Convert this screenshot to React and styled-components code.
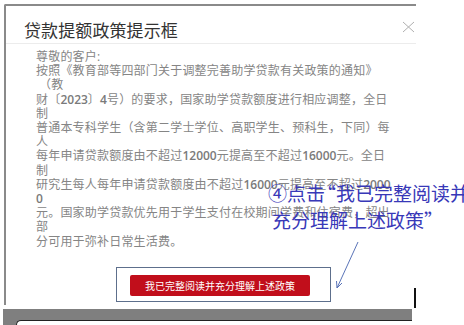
import React from 'react';
import styled, { createGlobalStyle } from 'styled-components';

const GlobalStyle = createGlobalStyle`
  html, body {
    margin: 0;
    padding: 0;
    background: #ffffff;
  }
  body {
    font-family: "Open Sans", "Noto Sans CJK SC", sans-serif;
  }
`;

const Page = styled.div`
  position: relative;
  width: 464px;
  height: 325px;
  overflow: hidden;
  background: #ffffff;
`;

const Dialog = styled.div`
  box-sizing: border-box;
  margin: 4px 0 0 4px;
  width: 412px;
  height: 301px;
  border-top: 2px solid #8a8a8a;
  border-left: 2px solid #8a8a8a;
  border-top-left-radius: 2px;
  display: flex;
  flex-direction: column;
`;

const Header = styled.div`
  box-sizing: border-box;
  height: 38px;
  display: flex;
  align-items: flex-start;
  justify-content: space-between;
  padding: 0 1px 0 18px;
  border-bottom: 1px solid #ececec;
`;

const Title = styled.div`
  font-family: "Noto Sans CJK SC", sans-serif;
  font-size: 17px;
  line-height: 24px;
  padding-top: 12px;
  color: #333333;
  letter-spacing: 0.1px;
`;

const Close = styled.div`
  width: 13px;
  height: 12px;
  margin-top: 15px;
  display: flex;
`;

const Body = styled.div`
  padding: 6px 0 0 30px;
  font-size: 12px;
  line-height: 14.2px;
  letter-spacing: 0.2px;
  color: #858585;
`;

const Line = styled.div`
  white-space: nowrap;
  padding-left: ${(p) => (p.$indent ? '3px' : '0')};
`;

const Num = styled.span`
  font-weight: 600;
  letter-spacing: 0;
  color: #7a7a7a;
`;

const Footer = styled.div`
  margin-top: 18px;
  padding-left: 110px;
  display: flex;
`;

const Frame = styled.div`
  border: 1px solid #5d6f8c;
  padding: 5px 20px 5px 13px;
`;

const AgreeButton = styled.button`
  width: 180px;
  height: 21px;
  border: none;
  border-radius: 2px;
  background: #c10e1b;
  color: #ffffff;
  font-family: "Noto Sans CJK SC", sans-serif;
  font-size: 10px;
  padding: 0;
  cursor: pointer;
`;

const Strip = styled.div`
  margin: 4px 0 0 3px;
  width: 409px;
  height: 16px;
  background: #7f7f7f;
  display: flex;
  flex-direction: column;
`;

const NextWindow = styled.div`
  margin: 11px 0 0 13px;
  flex: 1;
  background: #ffffff;
  border-top-left-radius: 6px;
  border-top: 1px solid #222;
  border-left: 1px solid #222;
`;

const Note = styled.div`
  position: absolute;
  left: 268px;
  top: 179px;
  font-family: "Noto Sans CJK SC", sans-serif;
  font-size: 19px;
  line-height: 27px;
  color: #3838b8;
  white-space: nowrap;
`;

const NoteLine = styled.div`
  padding-left: ${(p) => p.$shift || 0}px;
`;

const Quote = styled.span`
  display: inline-block;
  margin-left: ${(p) => p.$pull || 0}px;
  margin-right: ${(p) => p.$push || 0}px;
`;

const Arrow = styled.svg`
  position: absolute;
  left: 330px;
  top: 238px;
`;

const Cursor = styled.div`
  position: absolute;
  left: 414px;
  top: 288px;
  width: 2px;
  height: 20px;
  background: #111;
`;

export default function App() {
  return (
    <Page>
      <GlobalStyle />
      <Dialog>
        <Header>
          <Title>贷款提额政策提示框</Title>
          <Close>
            <svg width="13" height="12" viewBox="0 0 13 12">
              <path d="M1 1 L12 11 M12 1 L1 11" stroke="#b0b0b0" strokeWidth="1" fill="none" />
            </svg>
          </Close>
        </Header>
        <Body>
          <Line>尊敬的客户:</Line>
          <Line>按照《教育部等四部门关于调整完善助学贷款有关政策的通知》</Line>
          <Line $indent>（教</Line>
          <Line>财〔<Num>2023</Num>〕<Num>4</Num>号）的要求，国家助学贷款额度进行相应调整，全日</Line>
          <Line>制</Line>
          <Line>普通本专科学生（含第二学士学位、高职学生、预科生，下同）每</Line>
          <Line>人</Line>
          <Line>每年申请贷款额度由不超过<Num>12000</Num>元提高至不超过<Num>16000</Num>元。全日</Line>
          <Line>制</Line>
          <Line>研究生每人每年申请贷款额度由不超过<Num>16000</Num>元提高至不超过<Num>2000</Num></Line>
          <Line><Num>0</Num></Line>
          <Line>元。国家助学贷款优先用于学生支付在校期间学费和住宿费，超出</Line>
          <Line>部</Line>
          <Line>分可用于弥补日常生活费。</Line>
        </Body>
        <Footer>
          <Frame>
            <AgreeButton>我已完整阅读并充分理解上述政策</AgreeButton>
          </Frame>
        </Footer>
      </Dialog>
      <Strip>
        <NextWindow />
      </Strip>

      <Note>
        <NoteLine>④点击<Quote $pull={-8}>“</Quote>我已完整阅读并</NoteLine>
        <NoteLine $shift={4}>充分理解上述政策<Quote>”</Quote></NoteLine>
      </Note>
      <Arrow width="34" height="54" viewBox="0 0 34 54">
        <path d="M28 4 L7 50" stroke="#5a74b8" strokeWidth="1" fill="none" />
        <path d="M7 50 L6.5 43 M7 50 L12 45" stroke="#5a74b8" strokeWidth="1" fill="none" />
      </Arrow>
      <Cursor />
    </Page>
  );
}
